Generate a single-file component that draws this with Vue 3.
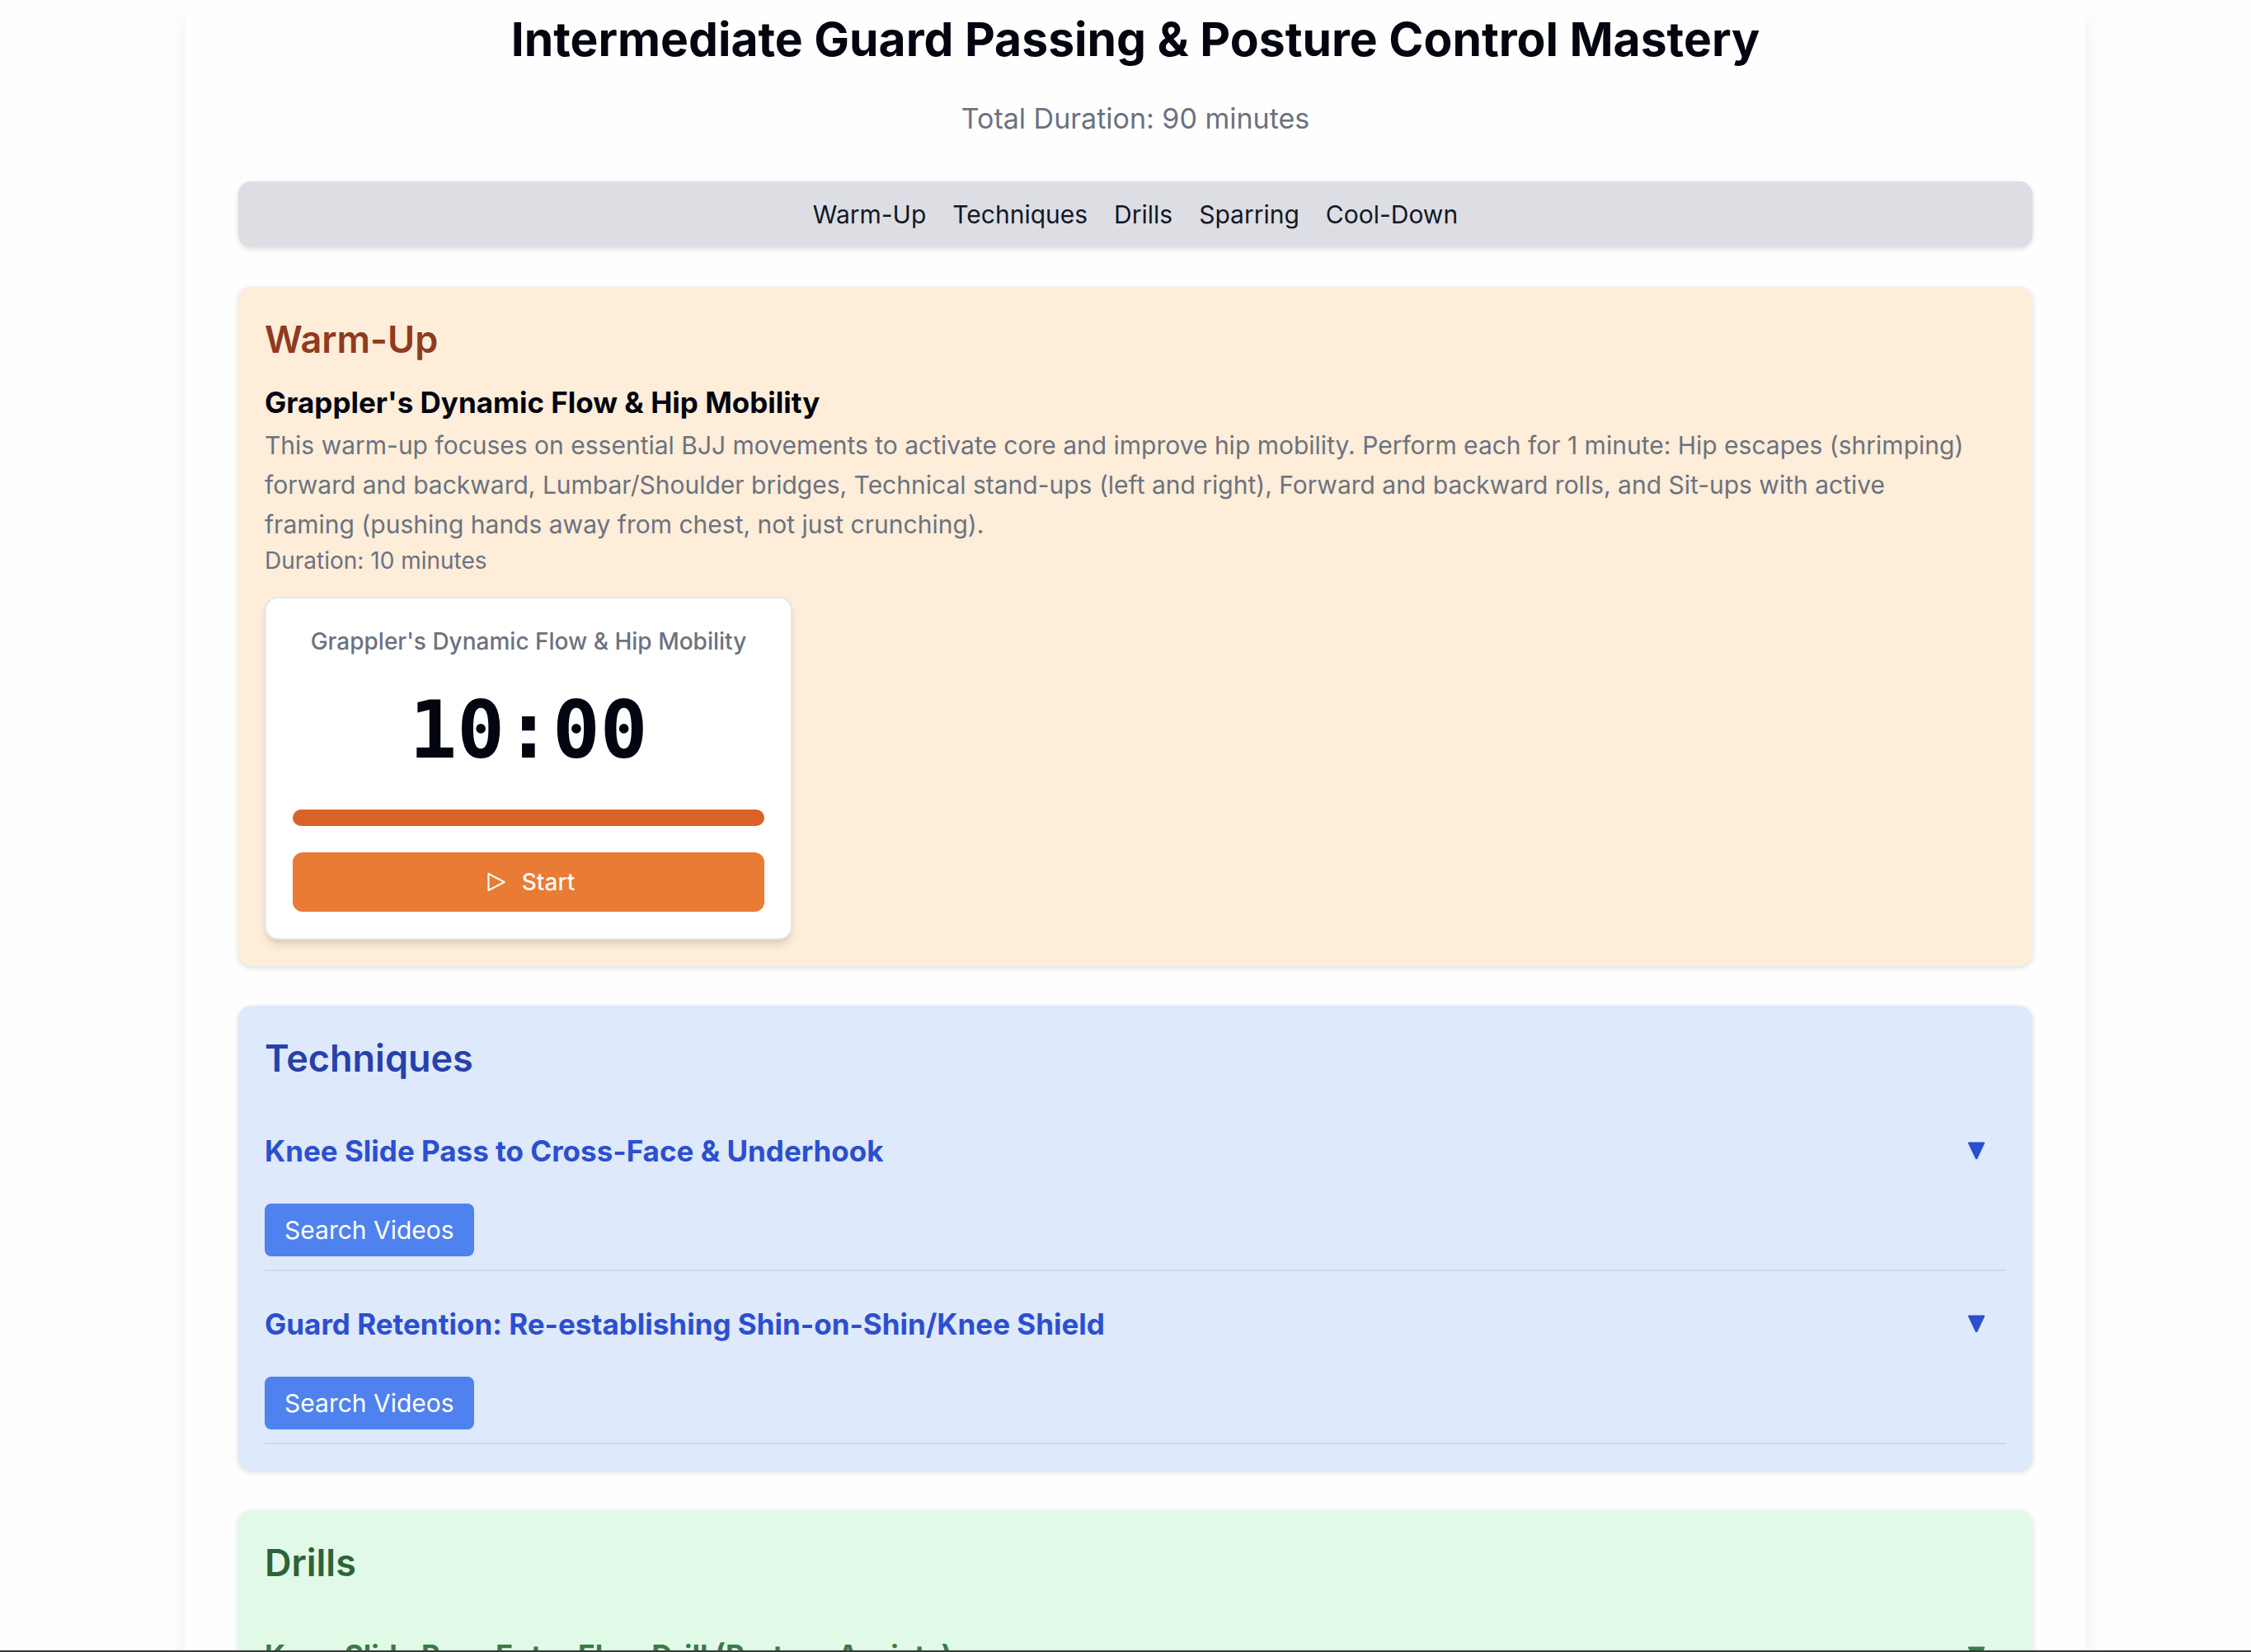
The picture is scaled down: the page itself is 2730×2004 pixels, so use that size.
<script setup>
import { reactive } from 'vue'

const navLinks = [
  { label: 'Warm-Up', href: '#warm-up' },
  { label: 'Techniques', href: '#techniques' },
  { label: 'Drills', href: '#drills' },
  { label: 'Sparring', href: '#sparring' },
  { label: 'Cool-Down', href: '#cool-down' }
]

const sections = reactive([
  {
    id: 'techniques',
    title: 'Techniques',
    items: [
      { title: 'Knee Slide Pass to Cross-Face & Underhook', open: false },
      { title: 'Guard Retention: Re-establishing Shin-on-Shin/Knee Shield', open: false }
    ]
  },
  {
    id: 'drills',
    title: 'Drills',
    items: [{ title: 'Knee Slide Pass Entry Flow Drill (Partner Assists)', open: false }]
  }
])
</script>

<template>
  <div class="viewport">
    <main class="plan">
      <header class="plan-header">
        <h1>Intermediate Guard Passing &amp; Posture Control Mastery</h1>
        <p>Total Duration: 90 minutes</p>
      </header>

      <nav class="plan-nav">
        <a v-for="link in navLinks" :key="link.href" :href="link.href">{{ link.label }}</a>
      </nav>

      <section id="warm-up" class="section warm-up">
        <h2>Warm-Up</h2>
        <h3>Grappler's Dynamic Flow &amp; Hip Mobility</h3>
        <p class="description">
          This warm-up focuses on essential BJJ movements to activate core and improve hip mobility.
          Perform each for 1 minute: Hip escapes (shrimping) forward and backward, Lumbar/Shoulder
          bridges, Technical stand-ups (left and right), Forward and backward rolls, and Sit-ups with
          active framing (pushing hands away from chest, not just crunching).
        </p>
        <p class="duration">Duration: 10 minutes</p>

        <div class="timer">
          <p class="timer-label">Grappler's Dynamic Flow &amp; Hip Mobility</p>
          <div class="timer-clock">10:00</div>
          <div class="timer-progress"></div>
          <button type="button" class="timer-start">
            <svg viewBox="0 0 15 15" aria-hidden="true">
              <path
                fill="currentColor"
                fill-rule="evenodd"
                d="M3.24182 2.32181C3.3919 2.23132 3.5784 2.22601 3.73338 2.30781L12.7334 7.05781C12.8974 7.14436 13 7.31457 13 7.5C13 7.68543 12.8974 7.85564 12.7334 7.94219L3.73338 12.6922C3.5784 12.774 3.3919 12.7687 3.24182 12.6782C3.09175 12.5877 3 12.4252 3 12.25V2.75C3 2.57476 3.09175 2.4123 3.24182 2.32181ZM4 3.57925V11.4207L11.4288 7.5L4 3.57925Z"
              />
            </svg>
            Start
          </button>
        </div>
      </section>

      <section
        v-for="section in sections"
        :id="section.id"
        :key="section.id"
        class="section"
        :class="section.id"
      >
        <h2>{{ section.title }}</h2>
        <div v-for="item in section.items" :key="item.title" class="item">
          <button
            type="button"
            class="item-toggle"
            :aria-expanded="item.open"
            @click="item.open = !item.open"
          >
            {{ item.title }}
            <svg viewBox="0 0 24 24" :class="{ flipped: item.open }" aria-hidden="true">
              <path
                fill="currentColor"
                d="M3 1.5H21C22 1.5 22.4 2.5 21.8 3.4L13.4 21.3C12.8 22.6 11.2 22.6 10.6 21.3L2.2 3.4C1.6 2.5 2 1.5 3 1.5Z"
              />
            </svg>
          </button>
          <button type="button" class="search">Search Videos</button>
        </div>
      </section>
    </main>
  </div>
</template>

<style>
body {
  margin: 0;
  background: #fefefe;
}
</style>

<style scoped>
.viewport {
  box-sizing: border-box;
  height: 100vh;
  padding-left: 24px;
  overflow: hidden;
  border-bottom: 2px solid #38383b;
  font-family: Inter, 'Liberation Sans', sans-serif;
  font-size: 30px;
  line-height: 48px;
  color: #030610;
}

h1,
h2,
h3,
p {
  margin: 0;
}

button {
  border: 0;
  font: inherit;
  cursor: pointer;
}

.plan {
  box-sizing: border-box;
  display: flex;
  flex-direction: column;
  gap: 48px;
  max-width: 2304px;
  margin: 0 auto;
  padding: 12px 64px 64px;
  background: #fefefe;
  box-shadow: 0 20px 30px -6px rgba(0, 0, 0, 0.1);
}

.plan-header {
  text-align: center;
}

.plan-header h1 {
  margin-bottom: 32px;
  font-size: 57px;
  font-weight: 700;
  line-height: 72px;
}

.plan-header p {
  font-size: 34px;
  line-height: 56px;
  color: #6c727f;
}

.plan-nav {
  display: flex;
  justify-content: center;
  gap: 32px;
  padding: 16px;
  border-radius: 16px;
  background: #dddee4;
  box-shadow: 0 2px 6px rgba(0, 0, 0, 0.14);
}

.plan-nav a {
  color: #121826;
  text-decoration: none;
}

.section {
  padding: 32px;
  border-radius: 16px;
  box-shadow: 0 2px 6px rgba(0, 0, 0, 0.14);
}

.section h2 {
  margin-bottom: 16px;
  font-size: 45px;
  font-weight: 600;
  line-height: 64px;
}

.warm-up {
  background: #fdedd9;
}

.warm-up h2 {
  color: #8f3b1f;
}

.warm-up h3 {
  font-size: 35px;
  font-weight: 700;
  line-height: 56px;
}

.description {
  padding-right: 40px;
  color: #6c727f;
}

.duration {
  font-size: 28px;
  line-height: 40px;
  color: #6c727f;
}

.timer {
  box-sizing: border-box;
  display: flex;
  flex-direction: column;
  max-width: 640px;
  margin-top: 24px;
  padding: 32px;
  border: 2px solid #e5e7eb;
  border-radius: 16px;
  background: #fff;
  box-shadow: 0 8px 12px -2px rgba(0, 0, 0, 0.1), 0 4px 8px -4px rgba(0, 0, 0, 0.1);
  text-align: center;
}

.timer-label {
  font-size: 28px;
  font-weight: 500;
  line-height: 40px;
  color: #6c727f;
}

.timer-clock {
  margin: 40px 0 48px;
  font-family: 'DejaVu Sans Mono', monospace;
  font-size: 96px;
  font-weight: 700;
  line-height: 96px;
}

.timer-progress {
  height: 20px;
  margin-bottom: 32px;
  border-radius: 10px;
  background: #d96228;
}

.timer-start {
  display: flex;
  align-items: center;
  justify-content: center;
  gap: 16px;
  padding: 16px;
  border-radius: 12px;
  background: #e97b35;
  color: #fafafa;
  font-size: 28px;
  font-weight: 500;
  line-height: 40px;
}

.timer-start svg {
  width: 32px;
  height: 32px;
}

.item {
  padding-bottom: 16px;
  border-bottom: 2px solid #c5dbfa;
}

.item-toggle {
  display: flex;
  align-items: center;
  justify-content: space-between;
  width: 100%;
  padding: 36px 24px 36px 0;
  background: none;
  color: inherit;
  font-size: 35px;
  font-weight: 700;
  line-height: 56px;
  text-align: left;
}

.item-toggle svg {
  width: 24px;
  height: 24px;
}

.item-toggle svg.flipped {
  transform: rotate(180deg);
}

.search {
  display: block;
  padding: 8px 24px;
  border-radius: 8px;
  background: #4f82ee;
  color: #fff;
}

.techniques {
  background: #dee9fb;
  color: #2c4fd0;
}

.techniques h2 {
  color: #2741a9;
}

.drills {
  background: #e1fae8;
  color: #3a7c44;
}

.drills h2 {
  color: #2e6339;
}
</style>
